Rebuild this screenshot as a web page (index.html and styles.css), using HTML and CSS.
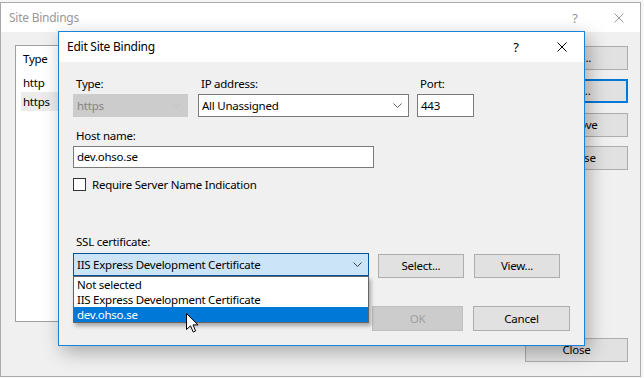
FILE: index.html
```html
<!DOCTYPE html>
<html lang="en">
<head>
    <meta charset="UTF-8">
    <title>Edit Site Binding</title>
    <link rel="stylesheet" href="styles.css">
</head>
<body>
    <div class="desk">
        <!-- Site Bindings (inactive, behind) -->
        <div class="window back">
            <div class="titlebar">
                <span class="title">Site Bindings</span>
                <span class="cap cap-help">?</span>
                <span class="cap cap-close">
                    <svg width="10" height="10" viewBox="0 0 10 10"><path d="M0.5 0.5 L9.5 9.5 M9.5 0.5 L0.5 9.5" stroke="#999" stroke-width="1"/></svg>
                </span>
            </div>
            <div class="back-body">
                <div class="back-main">
                    <div class="listview">
                        <div class="lv-head">Type</div>
                        <div class="lv-row">http</div>
                        <div class="lv-row selected">https</div>
                    </div>
                    <div class="side-buttons">
                        <button class="btn side-btn">Add...</button>
                        <button class="btn side-btn focused">Edit...</button>
                        <button class="btn side-btn">Remove</button>
                        <button class="btn side-btn">Browse</button>
                    </div>
                </div>
                <div class="back-foot">
                    <button class="btn close-btn">Close</button>
                </div>
            </div>
        </div>

        <!-- Edit Site Binding (active) -->
        <div class="window front">
            <div class="titlebar">
                <span class="title">Edit Site Binding</span>
                <span class="cap cap-help">?</span>
                <span class="cap cap-close">
                    <svg width="10" height="10" viewBox="0 0 10 10"><path d="M0.5 0.5 L9.5 9.5 M9.5 0.5 L0.5 9.5" stroke="#000" stroke-width="1"/></svg>
                </span>
            </div>
            <div class="front-body">
                <div class="row-top">
                    <div class="field field-type">
                        <div class="lbl">Type:</div>
                        <div class="combo disabled">
                            <span class="combo-text">https</span>
                            <svg class="chev" width="9" height="5" viewBox="0 0 9 5"><path d="M0.5 0.5 L4.5 4.5 L8.5 0.5" fill="none" stroke="#c2c2c2"/></svg>
                        </div>
                    </div>
                    <div class="field field-ip">
                        <div class="lbl">IP address:</div>
                        <div class="combo">
                            <span class="combo-text">All Unassigned</span>
                            <svg class="chev" width="9" height="5" viewBox="0 0 9 5"><path d="M0.5 0.5 L4.5 4.5 L8.5 0.5" fill="none" stroke="#606060"/></svg>
                        </div>
                    </div>
                    <div class="field field-port">
                        <div class="lbl">Port:</div>
                        <div class="input port-input">443</div>
                    </div>
                </div>

                <div class="field field-host">
                    <div class="lbl">Host name:</div>
                    <div class="input host-input">dev.ohso.se</div>
                </div>

                <div class="check-row">
                    <span class="checkbox"></span>
                    <span class="check-label">Require Server Name Indication</span>
                </div>

                <div class="lbl ssl-lbl">SSL certificate:</div>
                <div class="ssl-row">
                    <div class="combo-wrap">
                        <div class="combo open">
                            <span class="combo-text">IIS Express Development Certificate</span>
                            <svg class="chev" width="9" height="5" viewBox="0 0 9 5"><path d="M0.5 0.5 L4.5 4.5 L8.5 0.5" fill="none" stroke="#404040"/></svg>
                        </div>
                        <div class="dropdown">
                            <div class="dd-item">Not selected</div>
                            <div class="dd-item">IIS Express Development Certificate</div>
                            <div class="dd-item active">dev.ohso.se</div>
                        </div>
                    </div>
                    <button class="btn select-btn">Select...</button>
                    <button class="btn view-btn">View...</button>
                </div>

                <div class="row-bottom">
                    <button class="btn ok-btn" disabled>OK</button>
                    <button class="btn cancel-btn">Cancel</button>
                </div>
            </div>
        </div>

        <svg class="cursor" width="13" height="20" viewBox="0 0 13 20">
            <path d="M0.5 0.5 L0.5 16.5 L4.5 12.8 L7.2 19 L9.6 18 L7 11.9 L12 11.9 Z" fill="#fff" stroke="#000" stroke-width="1" stroke-linejoin="miter"/>
        </svg>
    </div>
</body>
</html>
```

FILE: styles.css
```css
/* Reset and base styles */
* {
    margin: 0;
    padding: 0;
    box-sizing: border-box;
}
body {
    font-family: "Noto Sans", "DejaVu Sans", sans-serif;
    font-size: 11.5px;
    letter-spacing: -0.25px;
    line-height: 16px;
    color: #000;
    background-color: #f6f6f6;
}
.desk {
    position: relative;
    width: 644px;
    height: 378px;
    overflow: hidden;
}
button {
    font: inherit;
    letter-spacing: inherit;
    color: inherit;
}

/* Windows */
.window {
    position: absolute;
    display: flex;
    flex-direction: column;
    background-color: #f0f0f0;
}
.titlebar {
    display: flex;
    align-items: center;
    background-color: #fff;
    flex-shrink: 0;
}
.title {
    flex: 1;
    padding-left: 8px;
    font-size: 12px;
}
.cap {
    display: flex;
    align-items: center;
    justify-content: center;
    height: 100%;
}
.cap-help {
    font-size: 13px;
}

.back {
    left: 0;
    top: 2px;
    width: 641px;
    height: 375px;
    border: 1px solid #aaa;
}
.back .titlebar {
    height: 29px;
    color: #999;
}
.back .cap-help {
    width: 46px;
}
.back .cap-close {
    width: 42px;
}

.front {
    left: 58px;
    top: 31px;
    width: 527px;
    height: 315px;
    border: 1px solid #1883d7;
    box-shadow: 4px 6px 18px rgba(0, 0, 0, 0.3);
}
.front .titlebar {
    height: 30px;
}
.front .cap-help {
    width: 48px;
}
.front .cap-close {
    width: 44px;
}

/* Back dialog contents */
.back-body {
    flex: 1;
    padding: 13px 12px 0 14px;
}
.back-main {
    display: flex;
    height: 277px;
}
.listview {
    width: 498px;
    background-color: #fff;
    border: 1px solid #a0a0a0;
    padding: 5px 5px 0 5px;
}
.lv-head {
    padding-left: 2px;
    height: 20px;
    margin-bottom: 2px;
}
.lv-row {
    padding-left: 2px;
    height: 19px;
    line-height: 19px;
}
.lv-row.selected {
    background-color: #ececec;
}
.side-buttons {
    margin-left: auto;
    display: flex;
    flex-direction: column;
    padding-top: 1px;
}
.side-btn {
    margin-bottom: 9px;
}
.side-btn:nth-child(3) {
    margin-top: 1px;
}
.back-foot {
    display: flex;
    justify-content: flex-end;
    margin-top: 16px;
}

/* Buttons */
.btn {
    height: 24px;
    background-color: #e1e1e1;
    border: 1px solid #adadad;
    text-align: center;
}
.side-btn,
.close-btn {
    width: 103px;
}
.btn.focused {
    border: 2px solid #0078d7;
}
.btn:disabled {
    background-color: #cccccc;
    border-color: #bfbfbf;
    color: #a0a0a0;
}

/* Edit dialog contents */
.front-body {
    flex: 1;
    padding: 14px 14px 0 14px;
}
.row-top {
    display: flex;
}
.lbl {
    padding-left: 3px;
    height: 16px;
    margin-bottom: 2px;
}
.field-type {
    width: 115px;
}
.field-ip {
    width: 211px;
    margin-left: 10px;
}
.field-port {
    width: 57px;
    margin-left: 8px;
}
.combo {
    display: flex;
    align-items: center;
    height: 23px;
    border: 1px solid #7a7a7a;
    background-color: #fff;
    padding: 0 6px 0 3px;
}
.combo-text {
    flex: 1;
    white-space: nowrap;
}
.combo.disabled {
    background-color: #cccccc;
    border-color: #cccccc;
    color: #838383;
}
.combo.open {
    background-color: #cce4f7;
    border-color: #005499;
}
.input {
    background-color: #fff;
    border: 1px solid #7a7a7a;
    padding-left: 3px;
    display: flex;
    align-items: center;
}
.port-input {
    height: 23px;
}
.field-host {
    margin-top: 11px;
}
.host-input {
    width: 301px;
    height: 22px;
}
.check-row {
    display: flex;
    align-items: center;
    margin-top: 10px;
    height: 13px;
}
.checkbox {
    width: 13px;
    height: 13px;
    border: 1px solid #333;
    background-color: #fff;
}
.check-label {
    margin-left: 6px;
}
.ssl-lbl {
    margin-top: 43px;
    margin-bottom: 3px;
}
.ssl-row {
    display: flex;
    align-items: flex-start;
}
.combo-wrap {
    position: relative;
    width: 296px;
}
.dropdown {
    position: absolute;
    left: 0;
    top: 23px;
    width: 296px;
    background-color: #fff;
    border: 1px solid #646464;
    box-shadow: 2px 3px 4px rgba(0, 0, 0, 0.3);
    z-index: 2;
}
.dd-item {
    height: 15px;
    line-height: 15px;
    padding-left: 3px;
    white-space: nowrap;
}
.dd-item.active {
    background-color: #0078d7;
    color: #fff;
}
.select-btn {
    width: 86px;
    margin: 1px 0 0 9px;
}
.view-btn {
    width: 86px;
    margin: 1px 0 0 10px;
}
.row-bottom {
    display: flex;
    justify-content: flex-end;
    margin-top: 28px;
}
.ok-btn,
.cancel-btn {
    height: 25px;
}
.ok-btn {
    width: 91px;
}
.cancel-btn {
    width: 97px;
    margin-left: 10px;
}

/* Mouse pointer */
.cursor {
    position: absolute;
    left: 186px;
    top: 313px;
    z-index: 5;
}
```
